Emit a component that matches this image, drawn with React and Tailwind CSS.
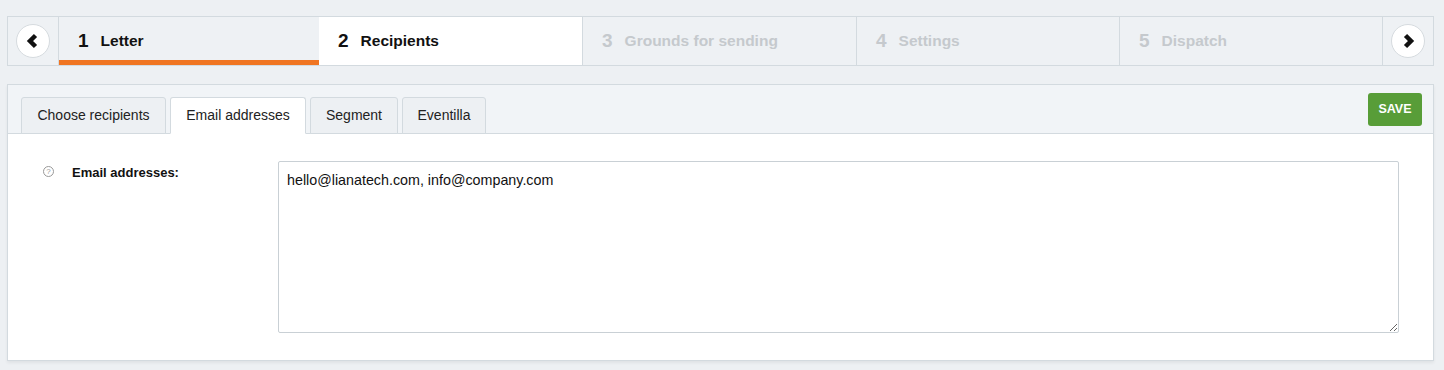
import React from "react";

const steps = [
  { n: 1, label: "Letter", w: "w-[260px]", state: "done" },
  { n: 2, label: "Recipients", w: "w-[263px]", state: "active" },
  { n: 3, label: "Grounds for sending", w: "w-[274px]", state: "todo" },
  { n: 4, label: "Settings", w: "w-[263px]", state: "todo" },
  { n: 5, label: "Dispatch", w: "w-[263px]", state: "todo" },
];

const tabs = [
  { label: "Choose recipients", w: "w-[145px]" },
  { label: "Email addresses", w: "w-[136px]", active: true },
  { label: "Segment", w: "w-[88px]" },
  { label: "Eventilla", w: "w-[84px]" },
];

function Arrow({ dir }) {
  return (
    <div className="flex h-[34px] w-[34px] items-center justify-center rounded-full border border-[#d6dbdf] bg-white">
      <svg width="16" height="16" viewBox="0 0 16 16">
        <polyline
          points={dir === "left" ? "10.5,2.5 5,8 10.5,13.5" : "5.5,2.5 11,8 5.5,13.5"}
          fill="none"
          stroke="#111"
          strokeWidth="4.5"
          strokeLinejoin="miter"
        />
      </svg>
    </div>
  );
}

export default function App() {
  return (
    <div className="min-h-[370px] w-[1444px] bg-[#edf0f3] pt-4 font-['Liberation_Sans',Arial,sans-serif]">
      {/* STEPPER */}
      <div className="ml-[7px] flex h-[50px] w-[1427px] border border-[#d3dadf] bg-[#eef1f4]">
        <div className="flex w-[51px] items-center justify-center border-r border-[#d3dadf]">
          <Arrow dir="left" />
        </div>
        {steps.map((s) => (
          <div
            key={s.n}
            className={`relative flex items-center gap-[12px] pl-[19px] ${s.w} ${
              s.state === "active" ? "bg-white" : ""
            } ${s.n >= 3 ? "border-l border-[#d3dadf]" : ""}`}
          >
            <span
              className={`text-[19px] font-bold ${
                s.state === "todo" ? "text-[#c5c9cd]" : "text-[#111]"
              }`}
            >
              {s.n}
            </span>
            <span
              className={`text-[15.5px] font-bold ${
                s.state === "todo" ? "text-[#c5c9cd]" : "text-[#111]"
              }`}
            >
              {s.label}
            </span>
            {s.state === "done" && (
              <div className="absolute bottom-0 left-0 h-[5px] w-full bg-[#f07522]" />
            )}
          </div>
        ))}
        <div className="flex flex-1 items-center justify-center border-l border-[#d3dadf]">
          <Arrow dir="right" />
        </div>
      </div>

      {/* PANEL */}
      <div className="ml-[7px] mt-[18px] w-[1427px] border border-[#d3dadf] bg-white shadow-[0_2px_3px_rgba(0,0,0,0.06)]">
        <div className="flex h-[49px] items-end justify-between border-b border-[#d3dadf] bg-[#f1f4f7] pl-[13px] pr-[11px]">
          <div className="-mb-px flex gap-[4px]">
            {tabs.map((t) => (
              <div
                key={t.label}
                className={`flex h-[37px] items-center justify-center rounded-t-[3px] border border-[#d3dadf] text-[14px] text-[#222] ${t.w} ${
                  t.active ? "border-b-white bg-white" : "bg-[#edf0f3]"
                }`}
              >
                {t.label}
              </div>
            ))}
          </div>
          <button className="mb-[7px] h-[33px] w-[54px] rounded-[3px] bg-[#589d38] text-[12.5px] font-bold text-white">
            SAVE
          </button>
        </div>

        <div className="flex pb-[27px] pt-[27px]">
          <div className="flex w-[270px] items-start gap-[18px] pl-[35px] pt-[2px]">
            <span className="mt-[3px] flex h-[11px] w-[11px] items-center justify-center rounded-full border border-[#999] text-[8px] leading-none text-[#999]">
              ?
            </span>
            <span className="text-[13px] font-bold text-[#111]">Email addresses:</span>
          </div>
          <textarea
            defaultValue="hello@lianatech.com, info@company.com"
            className="h-[172px] w-[1121px] rounded-[2px] border border-[#c9d0d5] px-[8px] py-[8px] text-[14.3px] text-[#111] font-['Liberation_Sans',Arial,sans-serif] outline-none"
          />
        </div>
      </div>
    </div>
  );
}
